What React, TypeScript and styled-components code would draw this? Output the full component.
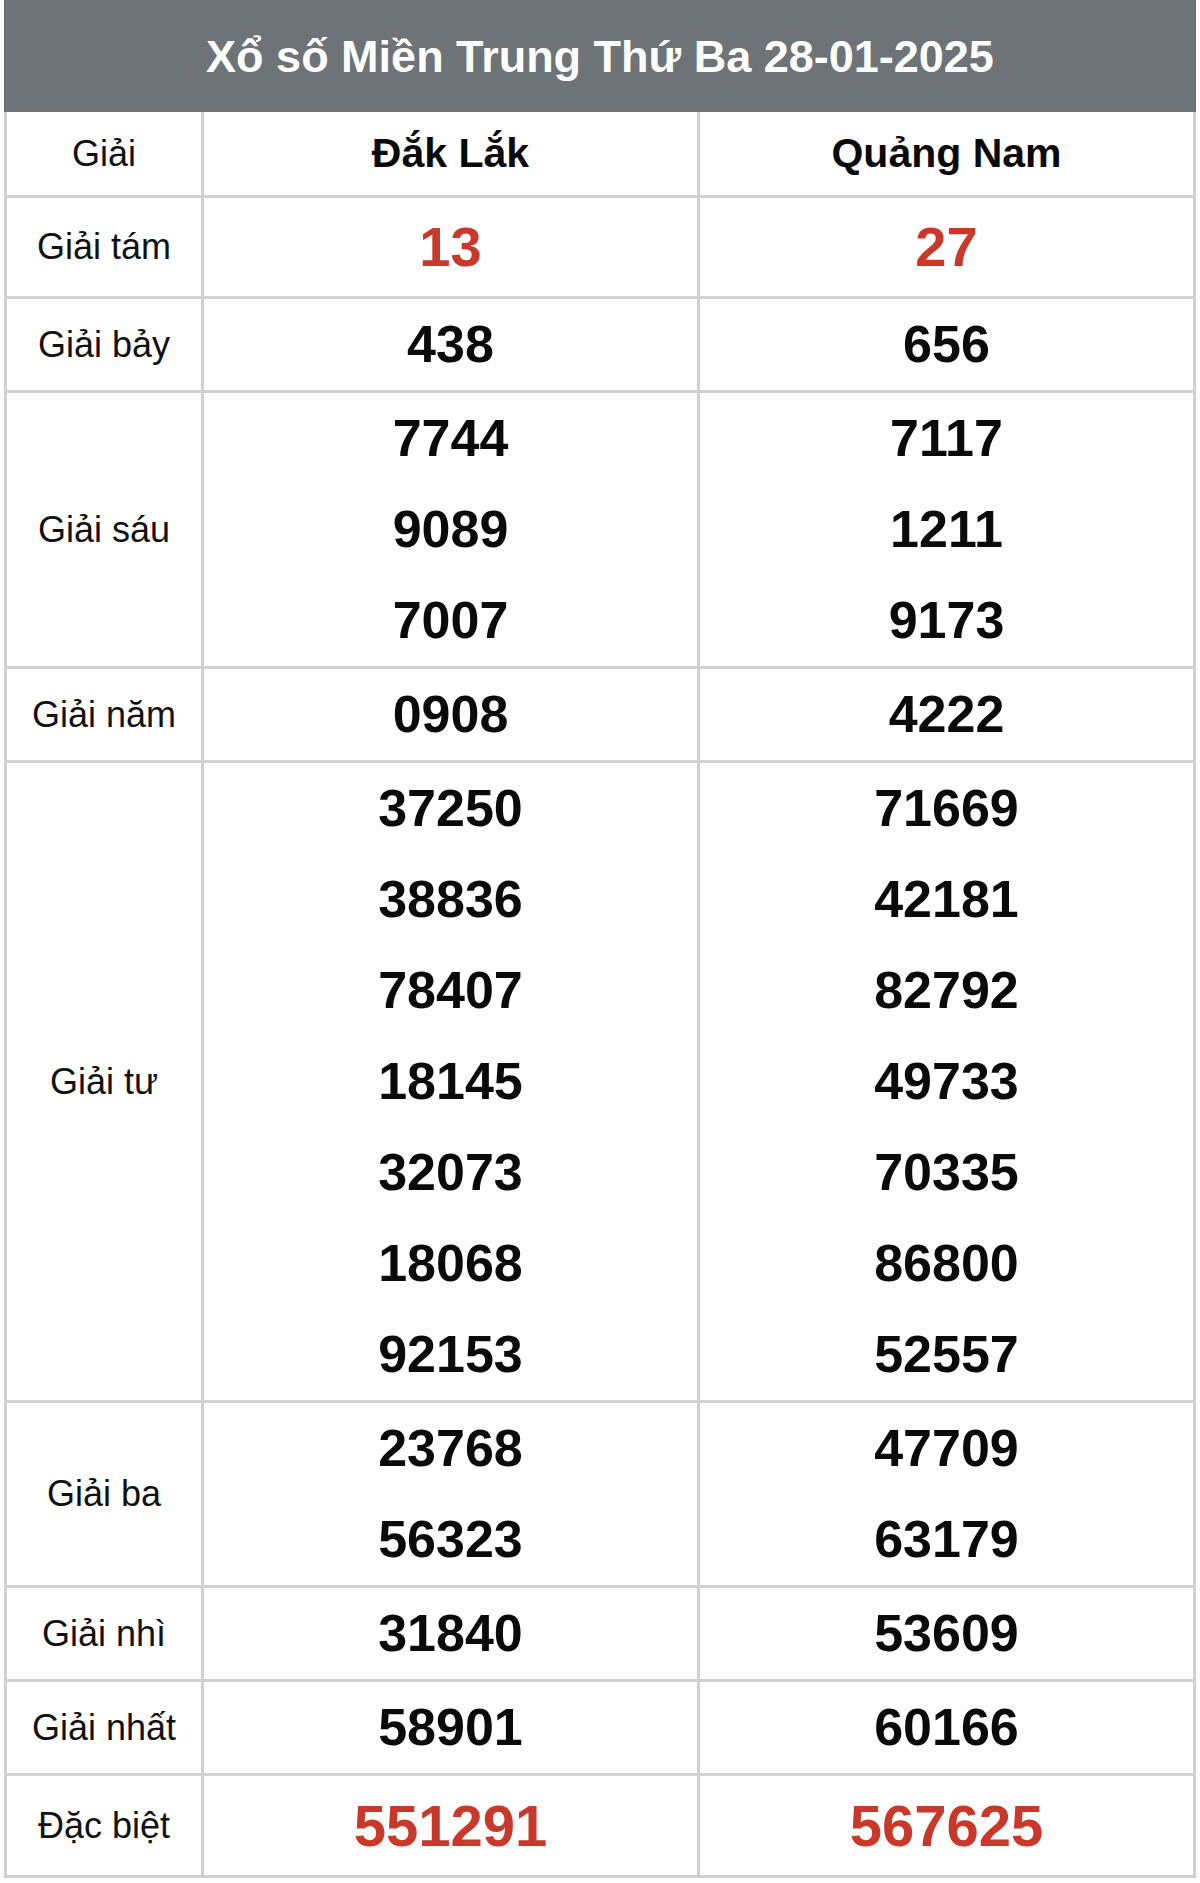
import React from 'react';
import styled, { createGlobalStyle } from 'styled-components';

type Prize = {
	label: string;
	values: [string[], string[]];
	highlight?: 'small' | 'big';
};

const provinces = ['Đắk Lắk', 'Quảng Nam'];

const prizes: Prize[] = [
	{ label: 'Giải tám', values: [['13'], ['27']], highlight: 'small' },
	{ label: 'Giải bảy', values: [['438'], ['656']] },
	{ label: 'Giải sáu', values: [['7744', '9089', '7007'], ['7117', '1211', '9173']] },
	{ label: 'Giải năm', values: [['0908'], ['4222']] },
	{
		label: 'Giải tư',
		values: [
			['37250', '38836', '78407', '18145', '32073', '18068', '92153'],
			['71669', '42181', '82792', '49733', '70335', '86800', '52557']
		]
	},
	{ label: 'Giải ba', values: [['23768', '56323'], ['47709', '63179']] },
	{ label: 'Giải nhì', values: [['31840'], ['53609']] },
	{ label: 'Giải nhất', values: [['58901'], ['60166']] },
	{ label: 'Đặc biệt', values: [['551291'], ['567625']], highlight: 'big' }
];

const App = () => {
	return (
		<>
			<GlobalStyle />
			<Page>
				<Board>
					<Title>Xổ số Miền Trung Thứ Ba 28-01-2025</Title>
					<Grid>
						<HeadCell>
							<Label>Giải</Label>
						</HeadCell>
						{provinces.map((name) => (
							<HeadCell key={name}>
								<Province>{name}</Province>
							</HeadCell>
						))}

						{prizes.map((prize) => (
							<React.Fragment key={prize.label}>
								<Cell>
									<Label>{prize.label}</Label>
								</Cell>
								{prize.values.map((list, i) => (
									<Cell key={i}>
										<NumberStack>
											{list.map((num, j) => (
												<Num key={j} highlight={prize.highlight}>
													{num}
												</Num>
											))}
										</NumberStack>
									</Cell>
								))}
							</React.Fragment>
						))}
					</Grid>
				</Board>
			</Page>
		</>
	);
};

export default App;

const GlobalStyle = createGlobalStyle`
	body {
		margin: 0;
		background: #ffffff;
		font-family: 'Liberation Sans', Arial, sans-serif;
	}
`;

const Page = styled.div`
	padding: 0 4px 3px 4px;
	background: #fdfdfd;
`;

const Board = styled.div`
	width: 1192px;
`;

const Title = styled.div`
	height: 112px;
	background: #6d7377;
	color: #ffffff;
	font-size: 45px;
	font-weight: 700;
	display: flex;
	align-items: center;
	justify-content: center;
	padding-top: 2px;
	box-sizing: border-box;
`;

const Grid = styled.div`
	display: grid;
	grid-template-columns: 197px 1fr 1fr;
	border-left: 3px solid #d1d1d1;
	background: #ffffff;
`;

const Cell = styled.div`
	display: flex;
	align-items: center;
	justify-content: center;
	border-right: 3px solid #d1d1d1;
	border-bottom: 3px solid #d1d1d1;
`;

const HeadCell = styled(Cell)`
	height: 86px;
	box-sizing: border-box;
`;

const Label = styled.span`
	font-size: 36px;
	color: #111111;
	line-height: 1;
`;

const Province = styled.span`
	font-size: 41px;
	font-weight: 700;
	color: #0a0a0a;
	line-height: 1;
`;

const NumberStack = styled.div`
	display: flex;
	flex-direction: column;
	align-items: center;
`;

const Num = styled.span<{ highlight?: 'small' | 'big' }>`
	font-size: ${(p) => (p.highlight === 'big' ? '58px' : p.highlight === 'small' ? '56px' : '52px')};
	line-height: ${(p) => (p.highlight === 'big' ? '99px' : p.highlight === 'small' ? '98px' : '91px')};
	font-weight: 700;
	color: ${(p) => (p.highlight ? '#c8392c' : '#0a0a0a')};
`;
